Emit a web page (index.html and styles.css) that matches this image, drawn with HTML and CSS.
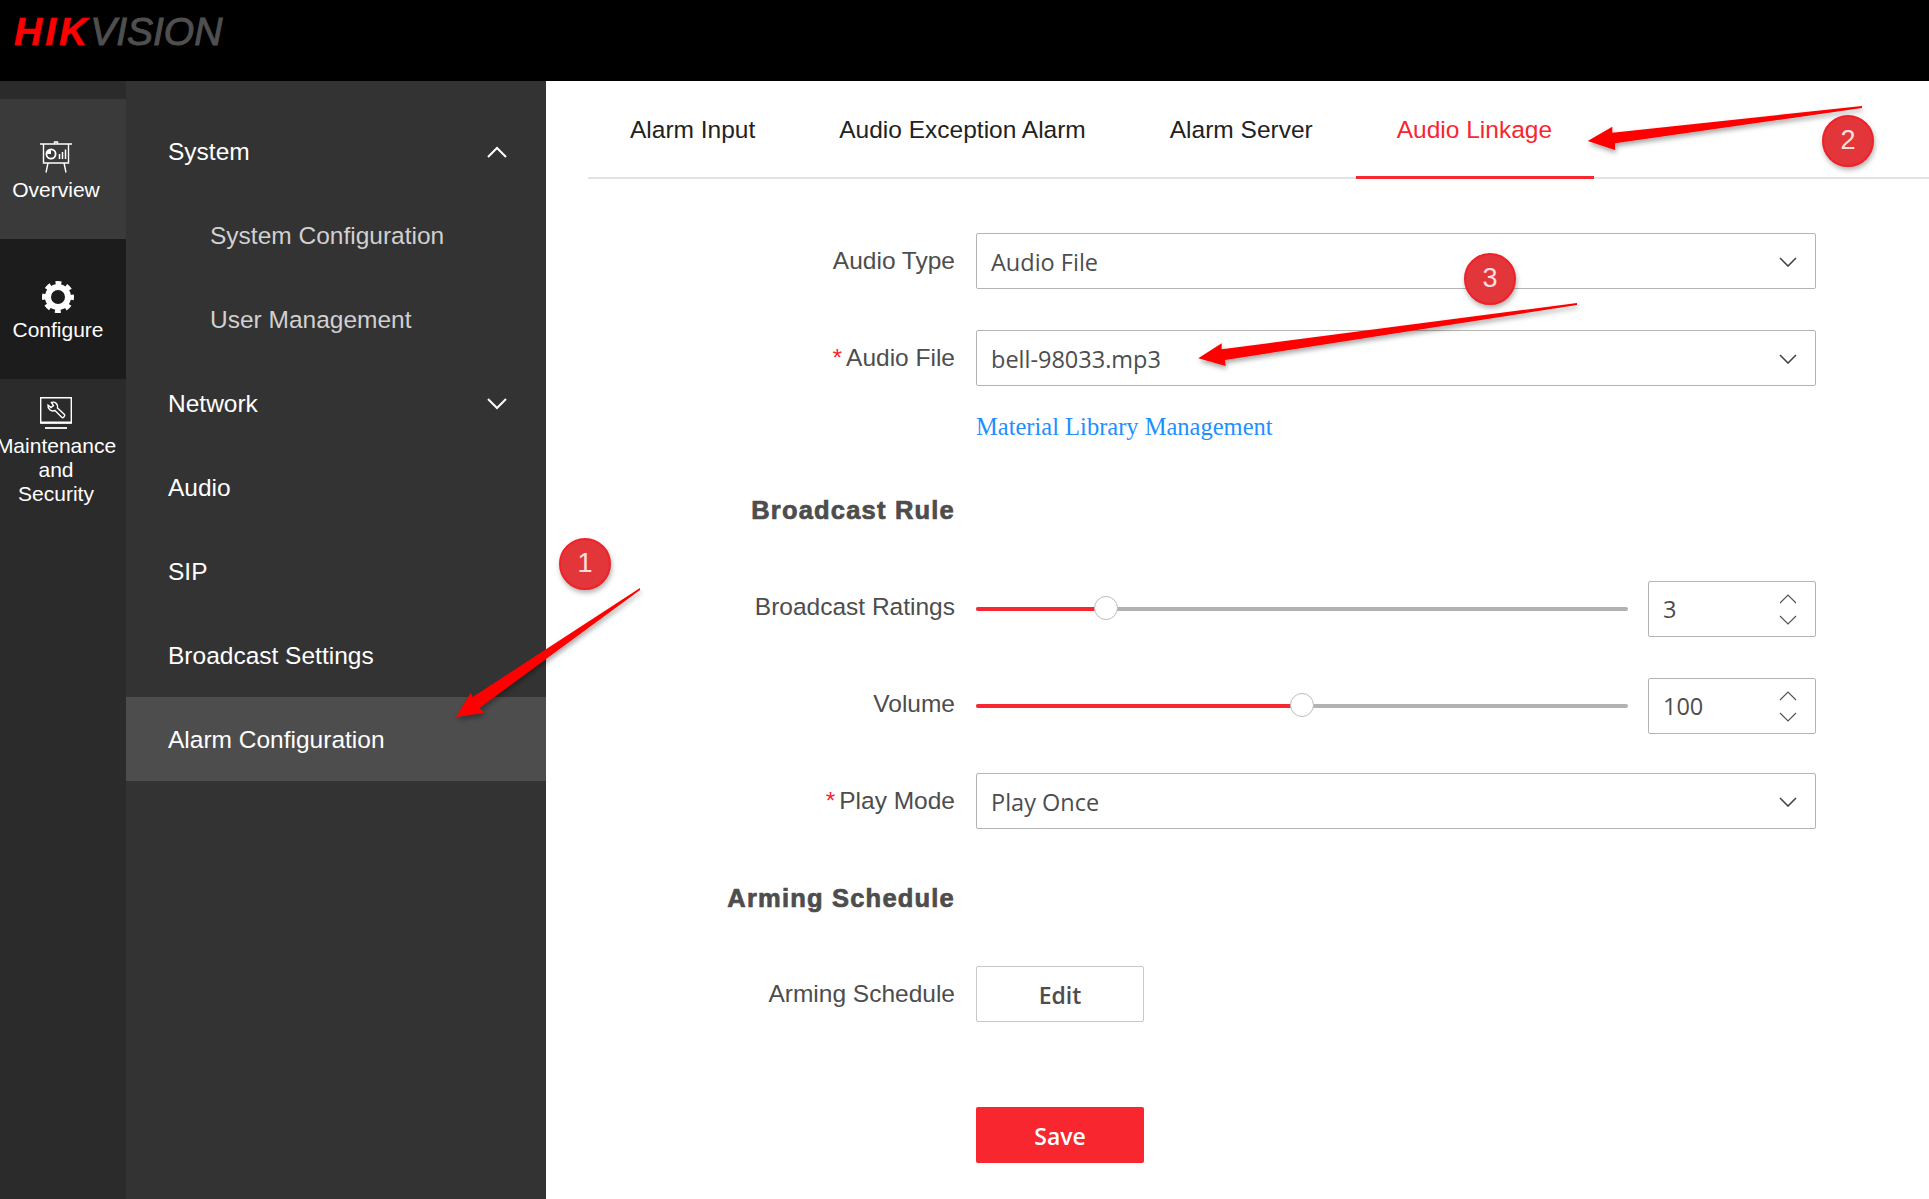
FILE: index.html
```html
<!DOCTYPE html>
<html lang="en">
<head>
    <meta charset="UTF-8">
    <title>Alarm Configuration</title>
    <link rel="stylesheet" href="styles.css">
</head>
<body>
    <header class="topbar">
        <div class="logo"><span class="logo-hik">HIK</span><span class="logo-vision">VISION</span></div>
    </header>

    <div class="layout">
        <!-- left rail -->
        <nav class="rail">
            <div class="rail-item rail-hover">
                <svg class="rail-icon" viewBox="0 0 32 32" fill="none" stroke="#fff" stroke-width="1.4">
                    <path d="M0 3h32M3.500 3v19h25V3M14.500 3V1h3v2M8 22l-2 9.500M24 22l2 9.500"/>
                    <circle cx="11" cy="13" r="4.600" stroke-width="1.800"/>
                    <path d="M11 13V8.400A4.600 4.600 0 0 0 6.400 13z" fill="#fff" stroke="none"/>
                    <path d="M19.500 18v-5M22.500 18v-7M25.500 18V8.500" stroke-width="1.500"/>
                </svg>
                <span>Overview</span>
            </div>
            <div class="rail-item rail-active">
                <svg class="rail-icon" viewBox="0 0 32 32" fill="none" stroke="#fff">
                    <circle cx="16" cy="16" r="10" stroke-width="6"/>
                    <circle cx="16" cy="16" r="14" stroke-width="4" stroke-dasharray="5.800 5.200" stroke-dashoffset="2.900"/>
                </svg>
                <span>Configure</span>
            </div>
            <div class="rail-item rail-maint">
                <svg class="rail-icon" viewBox="0 0 32 32" fill="none" stroke="#fff" stroke-width="1.400">
                    <path d="M.7.700h30.600v25.300H.7z"/>
                    <path d="M.7 25.500h30.600" stroke-width="2"/>
                    <path d="M5 31h22" stroke-width="1.800"/>
                    <path d="M22 20.500l-7-7c-4 1.500-7.500-1.500-7-5.500l3 2.500L13.500 8.500l-2-3c3.500-1.500 7 2 6 5.500l7 6.500c1 1-1.500 4-2.500 3z"/>
                </svg>
                <span>Maintenance<br>and<br>Security</span>
            </div>
        </nav>

        <!-- menu -->
        <aside class="side">
            <div class="menu-row">System
                <svg class="menu-caret" viewBox="0 0 20 12" fill="none" stroke="#fff" stroke-width="2"><path d="M1 11l9-9 9 9"/></svg>
            </div>
            <div class="menu-row menu-sub">System Configuration</div>
            <div class="menu-row menu-sub">User Management</div>
            <div class="menu-row">Network
                <svg class="menu-caret" viewBox="0 0 20 12" fill="none" stroke="#fff" stroke-width="2"><path d="M1 1l9 9 9-9"/></svg>
            </div>
            <div class="menu-row">Audio</div>
            <div class="menu-row">SIP</div>
            <div class="menu-row">Broadcast Settings</div>
            <div class="menu-row menu-active">Alarm Configuration</div>
        </aside>

        <main class="content">
            <div class="tabs">
                <div class="tab">Alarm Input</div>
                <div class="tab">Audio Exception Alarm</div>
                <div class="tab">Alarm Server</div>
                <div class="tab tab-active">Audio Linkage</div>
            </div>

            <div class="form">
                <div class="row">
                    <label class="row-label">Audio Type</label>
                    <div class="row-body">
                        <div class="select">Audio File
                            <svg class="chevron" viewBox="0 0 18 10" fill="none" stroke="#444" stroke-width="1.600"><path d="M1 1l8 8 8-8"/></svg>
                        </div>
                    </div>
                </div>
                <div class="row">
                    <label class="row-label"><span class="req">*</span>Audio File</label>
                    <div class="row-body">
                        <div class="select">bell-98033.mp3
                            <svg class="chevron" viewBox="0 0 18 10" fill="none" stroke="#444" stroke-width="1.600"><path d="M1 1l8 8 8-8"/></svg>
                        </div>
                        <a class="lib-link">Material Library Management</a>
                    </div>
                </div>
                <div class="row row-title">
                    <label class="row-label section-title">Broadcast Rule</label>
                </div>
                <div class="row row-slider">
                    <label class="row-label">Broadcast Ratings</label>
                    <div class="row-body slider-wrap">
                        <div class="slider">
                            <div class="slider-fill" style="width: 130px"></div>
                            <div class="slider-thumb" style="left: 130px"></div>
                        </div>
                        <div class="spin">3
                            <span class="spin-arrows">
                                <svg viewBox="0 0 18 10" fill="none" stroke="#555" stroke-width="1.200"><path d="M1 9l8-8 8 8"/></svg>
                                <svg viewBox="0 0 18 10" fill="none" stroke="#555" stroke-width="1.200"><path d="M1 1l8 8 8-8"/></svg>
                            </span>
                        </div>
                    </div>
                </div>
                <div class="row row-volume">
                    <label class="row-label">Volume</label>
                    <div class="row-body slider-wrap">
                        <div class="slider">
                            <div class="slider-fill" style="width: 326px"></div>
                            <div class="slider-thumb" style="left: 326px"></div>
                        </div>
                        <div class="spin">100
                            <span class="spin-arrows">
                                <svg viewBox="0 0 18 10" fill="none" stroke="#555" stroke-width="1.200"><path d="M1 9l8-8 8 8"/></svg>
                                <svg viewBox="0 0 18 10" fill="none" stroke="#555" stroke-width="1.200"><path d="M1 1l8 8 8-8"/></svg>
                            </span>
                        </div>
                    </div>
                </div>
                <div class="row">
                    <label class="row-label"><span class="req">*</span>Play Mode</label>
                    <div class="row-body">
                        <div class="select">Play Once
                            <svg class="chevron" viewBox="0 0 18 10" fill="none" stroke="#444" stroke-width="1.600"><path d="M1 1l8 8 8-8"/></svg>
                        </div>
                    </div>
                </div>
                <div class="row row-title">
                    <label class="row-label section-title">Arming Schedule</label>
                </div>
                <div class="row">
                    <label class="row-label">Arming Schedule</label>
                    <div class="row-body"><button class="btn">Edit</button></div>
                </div>
                <div class="row row-save">
                    <span class="row-label"></span>
                    <div class="row-body"><button class="btn btn-save">Save</button></div>
                </div>
            </div>
        </main>
    </div>

    <!-- annotations drawn over the screenshot -->
    <svg class="arrows" width="1929" height="1199" viewBox="0 0 1929 1199">
        <defs>
            <filter id="arrowShadow" x="-10%" y="-20%" width="120%" height="150%">
                <feDropShadow dx="1" dy="3" stdDeviation="2.500" flood-color="#000" flood-opacity="0.35"/>
            </filter>
        </defs>
        <g fill="#fe0000" filter="url(#arrowShadow)">
            <polygon points="640,588 472.700,697 470.700,692.700 456,717 484,712.700 479.300,708 640,590"/>
            <polygon points="1862,106 1612.300,132.700 1612.300,126.700 1587.700,141 1615,150 1615,143.300 1862,108"/>
            <polygon points="1577,303 1221.700,349.300 1221.700,343.300 1198.300,358.300 1225.700,366 1225,360 1577,305"/>
        </g>
    </svg>
    <div class="badge badge-one">1</div>
    <div class="badge badge-two">2</div>
    <div class="badge badge-three">3</div>
</body>
</html>
```

FILE: styles.css
```css
body {
    margin: 0;
    width: 1929px;
    height: 1199px;
    overflow: hidden;
    position: relative;
    background-color: #fff;
    font-family: "Liberation Sans", Arial, sans-serif;
    color: #4d4d4d;
}

.topbar {
    height: 81px;
    background-color: #000;
    box-sizing: border-box;
    padding: 10px 0 0 14px;
}

.logo {
    font-size: 39px;
    line-height: 44px;
    font-style: italic;
    font-weight: bold;
}

.logo-hik {
    color: #f00;
    letter-spacing: 3px;
    -webkit-text-stroke: 0.5px #f00;
}

.logo-vision {
    color: #4f4f4f;
    font-weight: normal;
    -webkit-text-stroke: 1px #4f4f4f;
}

.layout {
    display: flex;
    height: 1118px;
}

.rail {
    width: 126px;
    flex-shrink: 0;
    padding-top: 18px;
    box-sizing: border-box;
    overflow: hidden;
    background-color: #2b2b2b;
    color: #fff;
}

.rail-item {
    height: 140px;
    box-sizing: border-box;
    padding: 42px 14px 0 0;
    display: flex;
    flex-direction: column;
    align-items: center;
    font-size: 21px;
    line-height: 24px;
    text-align: center;
}

.rail-hover {
    background-color: #3a3a3a;
}

.rail-active {
    padding-right: 10px;
    background-color: #1c1c1c;
}

.rail-maint {
    padding-top: 18px;
}

.rail-icon {
    width: 32px;
    height: 32px;
    flex-shrink: 0;
    margin-bottom: 5px;
}

.side {
    width: 420px;
    flex-shrink: 0;
    padding-top: 28px;
    box-sizing: border-box;
    background-color: #333;
    color: #fff;
}

.menu-row {
    height: 84px;
    box-sizing: border-box;
    padding: 2px 39px 0 42px;
    display: flex;
    align-items: center;
    justify-content: space-between;
    font-size: 24.5px;
}

.menu-sub {
    padding-left: 84px;
    color: #d0d0d0;
}

.menu-active {
    background-color: #4d4d4d;
}

.menu-caret {
    width: 20px;
    height: 12px;
}

.content {
    flex: 1;
    padding-left: 42px;
}

.tabs {
    display: flex;
    height: 98px;
    border-bottom: 2px solid #e2e2e2;
    box-sizing: border-box;
}

.tab {
    height: 98px;
    box-sizing: border-box;
    padding: 2px 42px 0;
    border-bottom: 3px solid transparent;
    display: flex;
    align-items: center;
    font-size: 24.5px;
    color: #222;
}

.tab-active {
    margin-left: 1px;
    padding-left: 41px;
    color: #f8262f;
    border-bottom-color: #f8262f;
}

.form {
    padding-top: 54px;
}

.row {
    display: flex;
    gap: 21px;
    margin-bottom: 41px;
}

.row-title {
    height: 56px;
    margin-bottom: 40px;
}

.row-label {
    width: 367px;
    height: 56px;
    flex-shrink: 0;
    display: flex;
    align-items: center;
    justify-content: flex-end;
    font-size: 24.5px;
}

.section-title {
    font-size: 25.5px;
    font-weight: bold;
    letter-spacing: 1.2px;
    -webkit-text-stroke: 0.7px #4d4d4d;
}

.req {
    color: #f8262f;
    margin-right: 4px;
}

.row-body {
    width: 840px;
}

.select {
    height: 56px;
    box-sizing: border-box;
    border: 1px solid #b4b4b4;
    border-radius: 2px;
    padding: 2px 18px 0 14px;
    display: flex;
    align-items: center;
    justify-content: space-between;
    font-family: "Open Sans", sans-serif;
    font-size: 23.5px;
}

.chevron {
    width: 18px;
    height: 10px;
}

.lib-link {
    display: block;
    margin-top: 27px;
    line-height: 28px;
    font-family: "Liberation Serif", serif;
    font-size: 24.5px;
    color: #1e8fff;
}

.row-slider {
    margin-top: 43px;
}

.row-volume {
    margin-bottom: 39px;
}

.row-slider .row-label,
.row-volume .row-label {
    height: 52px;
}

.slider-wrap {
    display: flex;
    align-items: center;
    gap: 20px;
}

.slider {
    width: 652px;
    height: 4px;
    position: relative;
    border-radius: 2px;
    background-color: #b2b2b2;
}

.slider-fill {
    height: 4px;
    border-radius: 2px;
    background-color: #f8262f;
}

.slider-thumb {
    position: absolute;
    top: -11px;
    width: 24px;
    height: 24px;
    margin-left: -12px;
    box-sizing: border-box;
    border: 1px solid #bbb;
    border-radius: 50%;
    background-color: #fff;
}

.spin {
    width: 168px;
    height: 56px;
    box-sizing: border-box;
    border: 1px solid #b4b4b4;
    border-radius: 2px;
    padding: 0 18px 0 14px;
    display: flex;
    align-items: center;
    justify-content: space-between;
    font-family: "Open Sans", sans-serif;
    font-size: 23.5px;
    line-height: 32px;
}

.spin-arrows {
    display: flex;
    flex-direction: column;
    gap: 11px;
}

.spin-arrows svg {
    display: block;
    width: 18px;
    height: 10px;
}

.btn {
    display: block;
    width: 168px;
    height: 56px;
    padding: 1px 0 0;
    border: 1px solid #c8c8c8;
    border-radius: 2px;
    background-color: #fff;
    font-family: "Open Sans", sans-serif;
    font-size: 23px;
    font-weight: 600;
    color: #4d4d4d;
}

.btn-save {
    border: none;
    background-color: #f8262f;
    color: #fff;
}

.row-save {
    margin-top: 85px;
}

.arrows {
    position: absolute;
    top: 0;
    left: 0;
}

.badge {
    position: absolute;
    width: 52px;
    height: 52px;
    box-sizing: border-box;
    border: 2px solid #ee2228;
    border-radius: 50%;
    background-color: #e3363a;
    box-shadow: 1px 3px 5px rgba(0, 0, 0, 0.3);
    color: #fbe0e0;
    font-size: 27px;
    line-height: 46px;
    text-align: center;
}

.badge-one {
    left: 559px;
    top: 538px;
}

.badge-two {
    left: 1822px;
    top: 115px;
}

.badge-three {
    left: 1464px;
    top: 253px;
}
```
